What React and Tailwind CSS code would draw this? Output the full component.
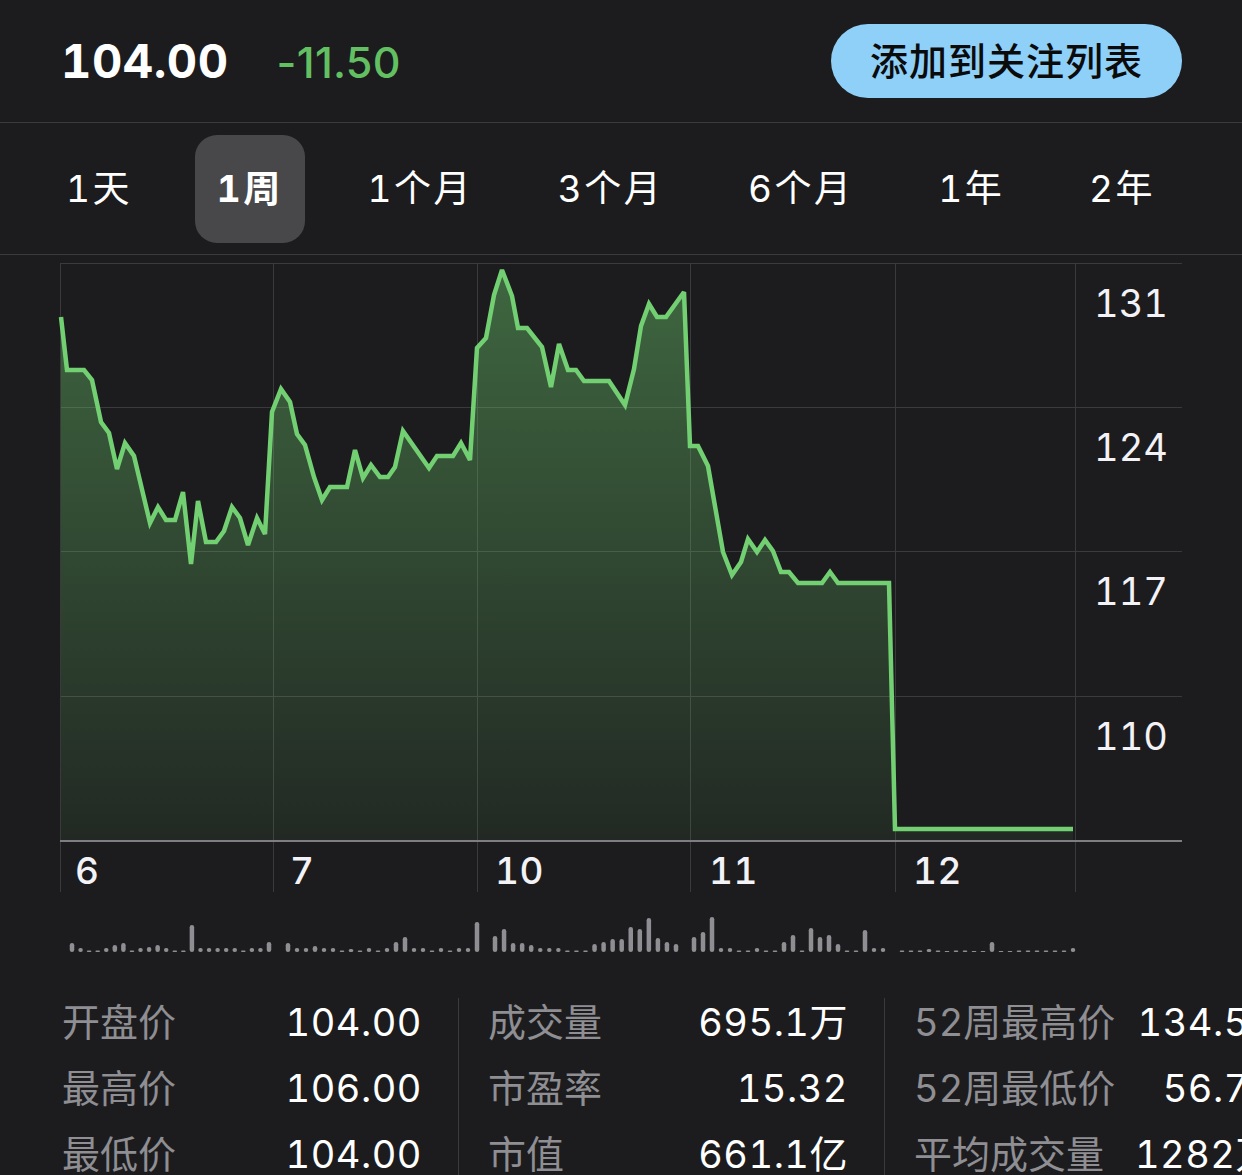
import React from 'react';

const tabs = ['1天', '1周', '1个月', '3个月', '6个月', '1年', '2年'];

// price line, in page pixels
const pts = [
  [61, 318], [67, 371], [84, 371], [92, 381], [101, 423], [109, 434], [117, 470], [125, 444], [134, 457],
  [150, 524], [158, 508], [166, 521], [175, 521], [183, 493], [191, 565], [198, 502], [206, 543], [216, 543],
  [224, 532], [232, 508], [240, 519], [248, 546], [257, 519], [265, 535], [272, 413], [281, 390], [290, 403],
  [297, 435], [305, 446], [314, 478], [322, 501], [330, 488], [347, 488], [355, 451], [363, 479], [371, 466],
  [380, 478], [388, 478], [395, 468], [403, 432], [429, 469], [437, 457], [453, 457], [461, 444], [470, 461],
  [477, 349], [486, 339], [494, 296], [502, 271], [512, 297], [518, 329], [527, 329], [542, 348], [551, 388],
  [559, 345], [568, 371], [576, 371], [584, 382], [609, 382], [625, 406], [634, 370], [641, 327], [649, 305],
  [657, 318], [666, 318], [684, 293], [690, 447], [698, 447], [708, 467], [723, 553], [732, 576], [741, 563],
  [748, 540], [757, 553], [765, 541], [773, 552], [781, 573], [789, 573], [798, 584], [822, 584], [830, 573],
  [838, 584], [889, 584], [895, 830], [1073, 830],
];

const volumeDays = [
  { start: 72, end: 269, h: [9, 4, 1.5, 1.5, 4, 7, 9, 1.5, 4, 5, 7, 4, 1.5, 1.5, 27, 4, 4, 4, 4, 4, 1.5, 4, 4, 10] },
  { start: 288, end: 477, h: [9, 4, 4, 6, 4, 4, 1.5, 3, 1.5, 4, 1.5, 4, 10, 15, 4, 4, 1.5, 4, 1.5, 4, 4, 30] },
  { start: 495, end: 676, h: [16, 23, 9, 9, 7, 4, 4, 4, 1.5, 1.5, 1.5, 8, 10, 13, 13, 25, 23, 34, 14, 10, 8] },
  { start: 694, end: 883, h: [15, 20, 35, 4, 4, 1.5, 1.5, 4, 1.5, 1.5, 10, 17, 1.5, 24, 15, 17, 8, 1.5, 1.5, 22, 4, 4] },
  { start: 902, end: 1073, h: [1.5, 1.5, 1.5, 3, 1.5, 1, 1.5, 1.5, 1, 1, 10, 1, 1, 1.5, 1.5, 1.5, 1.5, 1.5, 1.5, 4] },
];

const stats = [
  [['开盘价', '104.00'], ['最高价', '106.00'], ['最低价', '104.00']],
  [['成交量', '695.1万'], ['市盈率', '15.32'], ['市值', '661.1亿']],
  [['52周最高价', '134.50'], ['52周最低价', '56.73'], ['平均成交量', '1282万']],
];

const font = "Inter, 'Noto Sans CJK SC', sans-serif";
const svgText = { fontVariantNumeric: 'tabular-nums' };

const PriceChart = () => {
  const line = pts.map((p, i) => `${i ? 'L' : 'M'}${p[0]} ${p[1]}`).join(' ');
  const area = `M61 842 ${pts.map((p) => `L${p[0]} ${p[1]}`).join(' ')} L1073 842 Z`;
  const bars = volumeDays.flatMap((d) =>
    d.h.map((h, i) => ({ x: d.start + ((d.end - d.start) * i) / (d.h.length - 1), h }))
  );

  return (
    <svg width="1242" height="734" viewBox="0 256 1242 734" className="block">
      <defs>
        <linearGradient id="fill" x1="0" y1="264" x2="0" y2="842" gradientUnits="userSpaceOnUse">
          <stop offset="0" stopColor="#6fd06f" stopOpacity="0.42" />
          <stop offset="1" stopColor="#6fd06f" stopOpacity="0.07" />
        </linearGradient>
      </defs>
      {[264, 408, 552, 697].map((y) => (
        <line key={y} x1="60" x2="1182" y1={y + 0.5} y2={y + 0.5} stroke="#3a3a3c" strokeWidth="1" />
      ))}
      {[60, 273, 477, 690, 895, 1075].map((x) => (
        <line key={x} x1={x + 0.5} x2={x + 0.5} y1="264" y2="893" stroke="#3a3a3c" strokeWidth="1" />
      ))}
      <path d={area} fill="url(#fill)" />
      <path d={line} fill="none" stroke="#72d072" strokeWidth="4.5" strokeLinejoin="miter" strokeMiterlimit="3" />
      <line x1="60" x2="1182" y1="842" y2="842" stroke="#7d7d82" strokeWidth="2" />
      {[['131', 318], ['124', 462], ['117', 606], ['110', 751]].map(([t, y]) => (
        <text key={t} x="1094" y={y} fill="#f2f2f7" fontSize="38" fontFamily={font} style={svgText}>
          {t}
        </text>
      ))}
      {[['6', 75], ['7', 290], ['10', 495], ['11', 709], ['12', 913]].map(([t, x]) => (
        <text key={t} x={x} y="885" fill="#f2f2f7" fontSize="37" fontFamily={font} fontWeight="500" letterSpacing="0.5" style={svgText}>
          {t}
        </text>
      ))}
      {bars.map((b, i) => (
        <rect
          key={i}
          x={b.x - 2.25}
          y={953 - b.h}
          width="4.5"
          height={b.h}
          rx={Math.min(2.25, b.h / 2)}
          fill="#8e8e93"
        />
      ))}
    </svg>
  );
};

export default function App() {
  return (
    <div className="w-[1242px] h-[1175px] overflow-hidden bg-[#1c1c1e] text-white tabular-nums" style={{ fontFamily: font }}>
      {/* header */}
      <div className="h-[123px] flex items-center justify-between pl-[61px] pr-[60px] border-b border-[#3a3a3c]">
        <div className="flex items-baseline gap-[48px]">
          <span className="text-[47px] font-bold tracking-[0.5px]">104.00</span>
          <span className="text-[43px] font-medium text-[#63c062] proportional-nums tracking-[0.3px]">-11.50</span>
        </div>
        <button className="w-[351px] h-[74px] rounded-full bg-[#8fd0f8] text-[#0b0b0c] text-[38px] font-medium tracking-[1px]">
          添加到关注列表
        </button>
      </div>

      {/* range tabs */}
      <div className="h-[132px] flex items-center justify-between pl-[44px] pr-[65px] border-b border-[#3a3a3c]">
        {tabs.map((t) => (
          <div
            key={t}
            className={`h-[108px] px-[22px] flex items-center rounded-[22px] text-[37px] tracking-[2.5px] ${
              t === '1周' ? 'bg-[#48484a] font-bold' : 'font-normal'
            }`}
          >
            {t}
          </div>
        ))}
      </div>

      <PriceChart />

      {/* stats */}
      <div className="flex w-[1310px]">
        {stats.map((col, ci) => (
          <div key={ci} className="flex">
            {ci > 0 && <div className="w-px bg-[#3a3a3c] mt-[9px] self-stretch" />}
            <div className={`flex flex-col ${ci === 0 ? 'w-[458px] pl-[62px]' : 'w-[425px] pl-[29px]'} pr-[36px]`}>
              {col.map(([label, value]) => (
                <div key={label} className="h-[66px] flex items-center justify-between text-[38px]">
                  <span className="text-[#8e8e93]">{label}</span>
                  <span className="text-white tracking-[0.5px]">{value}</span>
                </div>
              ))}
            </div>
          </div>
        ))}
      </div>
    </div>
  );
}
